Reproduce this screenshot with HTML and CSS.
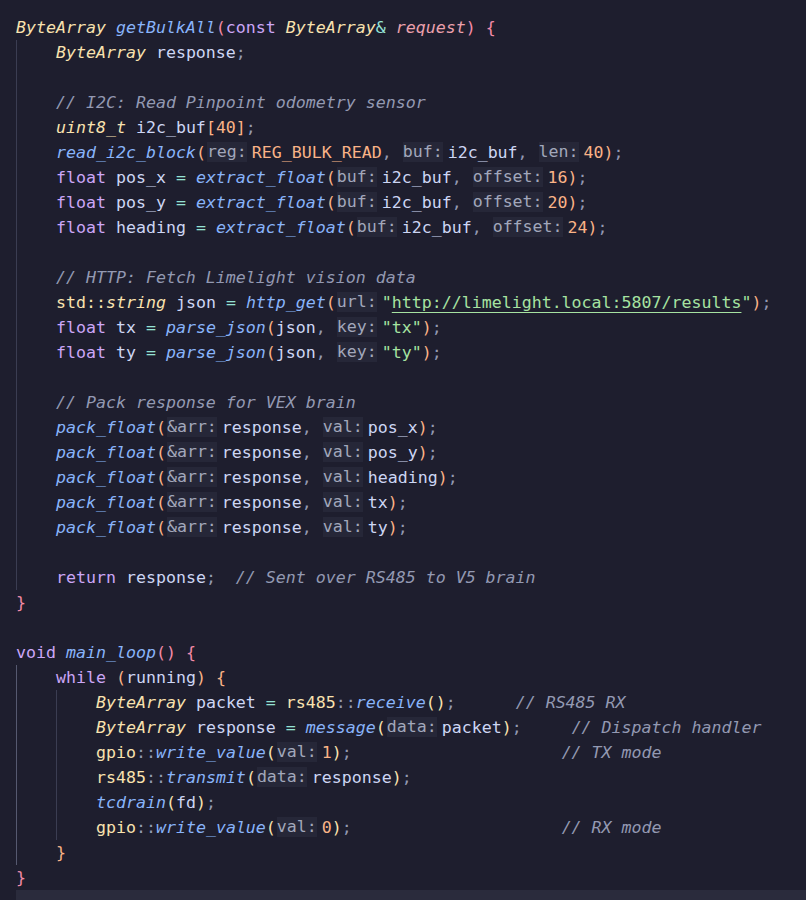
FILE: index.html
```html
<!DOCTYPE html>
<html lang="en">
<head>
<meta charset="utf-8">
<title>getBulkAll</title>
<link rel="stylesheet" href="styles.css">
</head>
<body>
<div class="editor">
<div class="ln"><span class="t">ByteArray</span> <span class="f">getBulkAll</span><span class="b1">(</span><span class="k">const</span> <span class="t">ByteArray</span><span class="o">&amp;</span> <span class="pa">request</span><span class="b1">)</span> <span class="b1">{</span></div>
<div class="block">
<div class="ln"><span class="t">ByteArray</span> response<span class="p">;</span></div>
<div class="ln"> </div>
<div class="ln"><span class="c">// I2C: Read Pinpoint odometry sensor</span></div>
<div class="ln"><span class="t">uint8_t</span> i2c_buf<span class="b2">[</span><span class="n">40</span><span class="b2">]</span><span class="p">;</span></div>
<div class="ln"><span class="f">read_i2c_block</span><span class="b2">(</span><span class="h">reg:</span><span class="n">REG_BULK_READ</span><span class="p">, </span><span class="h">buf:</span>i2c_buf<span class="p">, </span><span class="h">len:</span><span class="n">40</span><span class="b2">)</span><span class="p">;</span></div>
<div class="ln"><span class="k">float</span> pos_x <span class="o">=</span> <span class="f">extract_float</span><span class="b2">(</span><span class="h">buf:</span>i2c_buf<span class="p">, </span><span class="h">offset:</span><span class="n">16</span><span class="b2">)</span><span class="p">;</span></div>
<div class="ln"><span class="k">float</span> pos_y <span class="o">=</span> <span class="f">extract_float</span><span class="b2">(</span><span class="h">buf:</span>i2c_buf<span class="p">, </span><span class="h">offset:</span><span class="n">20</span><span class="b2">)</span><span class="p">;</span></div>
<div class="ln"><span class="k">float</span> heading <span class="o">=</span> <span class="f">extract_float</span><span class="b2">(</span><span class="h">buf:</span>i2c_buf<span class="p">, </span><span class="h">offset:</span><span class="n">24</span><span class="b2">)</span><span class="p">;</span></div>
<div class="ln"> </div>
<div class="ln"><span class="c">// HTTP: Fetch Limelight vision data</span></div>
<div class="ln"><span class="ns">std</span><span class="ns">::</span><span class="t">string</span> json <span class="o">=</span> <span class="f">http_get</span><span class="b2">(</span><span class="h">url:</span><span class="s">"<span class="url">http://limelight.local:5807/results</span>"</span><span class="b2">)</span><span class="p">;</span></div>
<div class="ln"><span class="k">float</span> tx <span class="o">=</span> <span class="f">parse_json</span><span class="b2">(</span>json<span class="p">, </span><span class="h">key:</span><span class="s">"tx"</span><span class="b2">)</span><span class="p">;</span></div>
<div class="ln"><span class="k">float</span> ty <span class="o">=</span> <span class="f">parse_json</span><span class="b2">(</span>json<span class="p">, </span><span class="h">key:</span><span class="s">"ty"</span><span class="b2">)</span><span class="p">;</span></div>
<div class="ln"> </div>
<div class="ln"><span class="c">// Pack response for VEX brain</span></div>
<div class="ln"><span class="f">pack_float</span><span class="b2">(</span><span class="h">&amp;arr:</span>response<span class="p">, </span><span class="h">val:</span>pos_x<span class="b2">)</span><span class="p">;</span></div>
<div class="ln"><span class="f">pack_float</span><span class="b2">(</span><span class="h">&amp;arr:</span>response<span class="p">, </span><span class="h">val:</span>pos_y<span class="b2">)</span><span class="p">;</span></div>
<div class="ln"><span class="f">pack_float</span><span class="b2">(</span><span class="h">&amp;arr:</span>response<span class="p">, </span><span class="h">val:</span>heading<span class="b2">)</span><span class="p">;</span></div>
<div class="ln"><span class="f">pack_float</span><span class="b2">(</span><span class="h">&amp;arr:</span>response<span class="p">, </span><span class="h">val:</span>tx<span class="b2">)</span><span class="p">;</span></div>
<div class="ln"><span class="f">pack_float</span><span class="b2">(</span><span class="h">&amp;arr:</span>response<span class="p">, </span><span class="h">val:</span>ty<span class="b2">)</span><span class="p">;</span></div>
<div class="ln"> </div>
<div class="ln"><span class="k">return</span> response<span class="p">;</span>  <span class="c">// Sent over RS485 to V5 brain</span></div>
</div>
<div class="ln"><span class="b1">}</span></div>
<div class="ln"> </div>
<div class="ln"><span class="k">void</span> <span class="f">main_loop</span><span class="b1">()</span> <span class="b1">{</span></div>
<div class="block active">
<div class="ln"><span class="k">while</span> <span class="b2">(</span>running<span class="b2">)</span> <span class="b2">{</span></div>
<div class="block">
<div class="ln"><span class="t">ByteArray</span> packet <span class="o">=</span> <span class="ns">rs485</span><span class="p">::</span><span class="f">receive</span><span class="b3">()</span><span class="p">;</span>      <span class="c">// RS485 RX</span></div>
<div class="ln"><span class="t">ByteArray</span> response <span class="o">=</span> <span class="f">message</span><span class="b3">(</span><span class="h">data:</span>packet<span class="b3">)</span><span class="p">;</span>     <span class="c">// Dispatch handler</span></div>
<div class="ln"><span class="ns">gpio</span><span class="p">::</span><span class="f">write_value</span><span class="b3">(</span><span class="h">val:</span><span class="n">1</span><span class="b3">)</span><span class="p">;</span>                     <span class="c">// TX mode</span></div>
<div class="ln"><span class="ns">rs485</span><span class="p">::</span><span class="f">transmit</span><span class="b3">(</span><span class="h">data:</span>response<span class="b3">)</span><span class="p">;</span></div>
<div class="ln"><span class="f">tcdrain</span><span class="b3">(</span>fd<span class="b3">)</span><span class="p">;</span></div>
<div class="ln"><span class="ns">gpio</span><span class="p">::</span><span class="f">write_value</span><span class="b3">(</span><span class="h">val:</span><span class="n">0</span><span class="b3">)</span><span class="p">;</span>                     <span class="c">// RX mode</span></div>
</div>
<div class="ln"><span class="b2">}</span></div>
</div>
<div class="ln"><span class="b1">}</span></div>
<div class="ln current"> </div>
</div>
</body>
</html>
```
FILE: styles.css
```css
html, body {
  margin: 0;
  padding: 0;
  background: #1e1e2e;
  width: 806px;
  height: 900px;
  overflow: hidden;
}

.editor {
  padding: 15px 0 0 16px;
  font-family: "DejaVu Sans Mono", monospace;
  font-size: 16.6px;
  color: #cdd6f4;
}

.ln {
  height: 25px;
  line-height: 25px;
  white-space: pre;
}

.block {
  border-left: 1px solid #3b3d52;
  padding-left: 39px;
}

.block.active {
  border-left-color: #565970;
}

.current {
  background: #2a2b3c;
}

.k { color: #cba6f7; }
.t { color: #f9e2af; font-style: italic; }
.ns { color: #f9e2af; }
.f { color: #89b4fa; font-style: italic; }
.n { color: #fab387; }
.s { color: #a6e3a1; }
.url {
  text-decoration: underline;
  text-decoration-color: #a6e3a1;
  text-underline-offset: 4px;
  text-decoration-thickness: 1px;
}
.c { color: #9399b2; font-style: italic; }
.o { color: #94e2d5; }
.p { color: #9399b2; }
.pa { color: #eba0ac; font-style: italic; }
.b1 { color: #f38ba8; }
.b2 { color: #fab387; }
.b3 { color: #f9e2af; }

.h {
  display: inline-block;
  height: 20px;
  line-height: 20px;
  vertical-align: 1px;
  background: #262738;
  color: #a2a7bb;
  margin: 0 5px 0 1px;
}
```
